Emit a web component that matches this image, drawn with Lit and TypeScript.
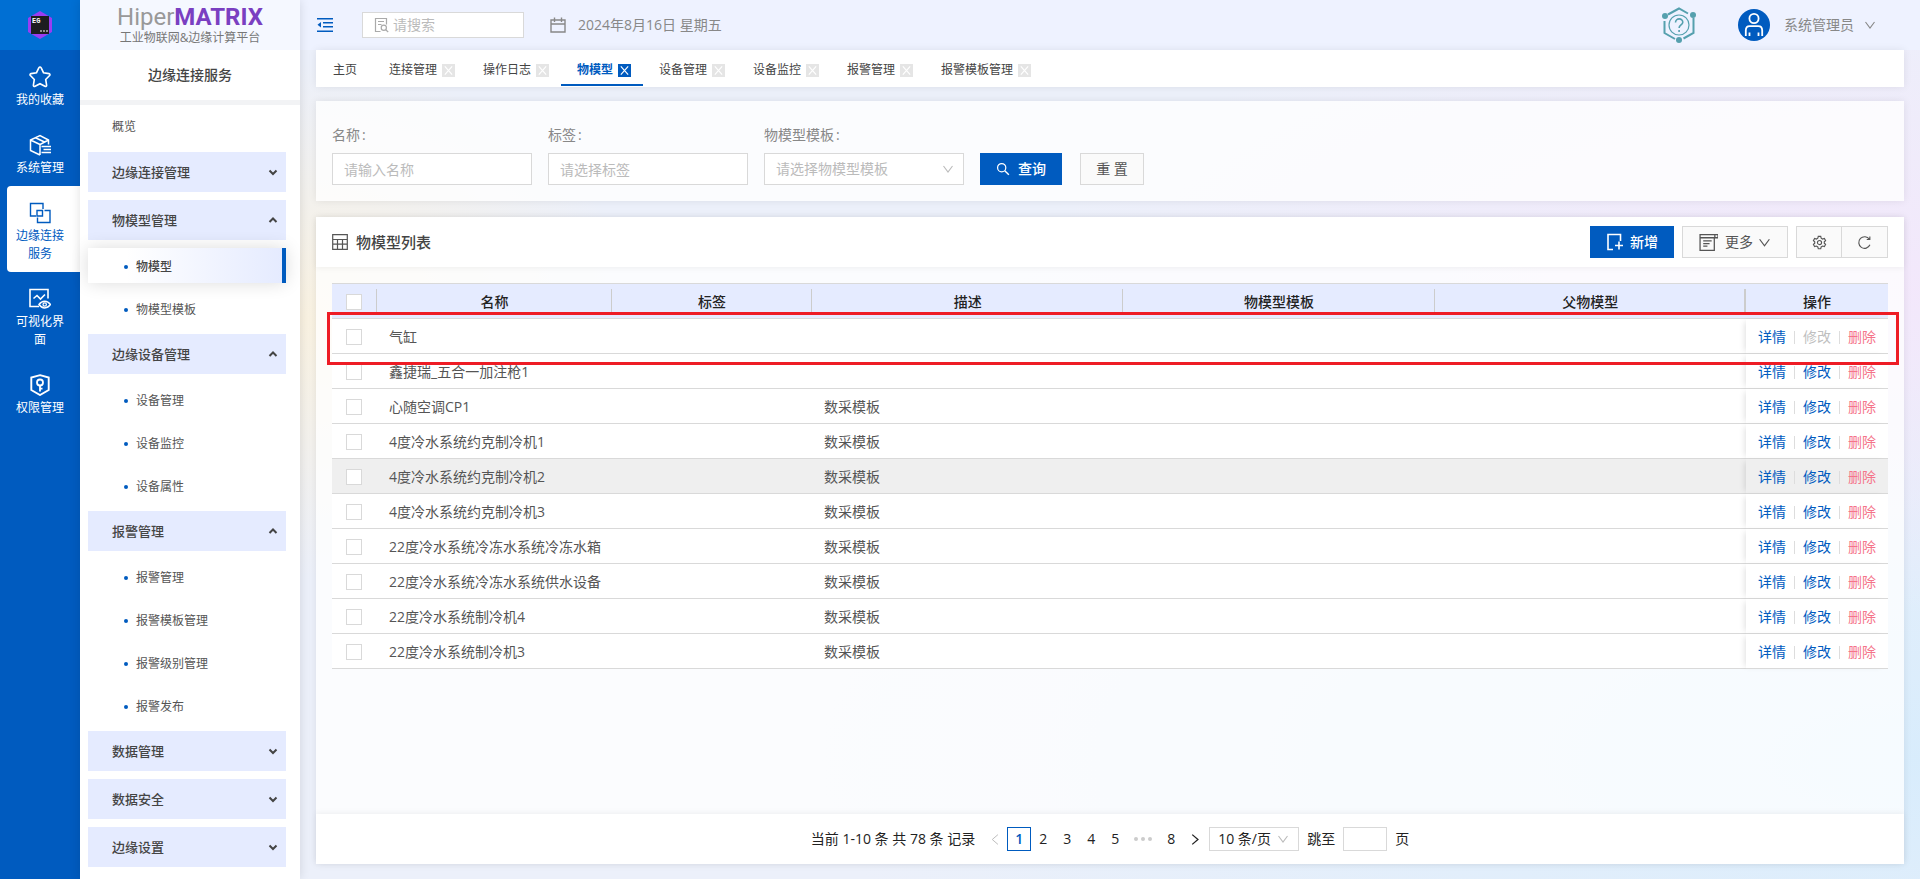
import { LitElement, html, svg, css, nothing } from "lit";
import { customElement, property, state } from "lit/decorators.js";
import { classMap } from "lit/directives/class-map.js";

const icons: Record<string, unknown> = {
  star: svg`<path d="M11 1c.6 0 .9.400 1.200.9l2.300 4.800 5.500.9c1 .2 1.300 1.200.6 1.900l-3.900 4 .9 5.600c.2 1-.8 1.700-1.700 1.200L11 17.700l-4.900 2.600c-.9.5-1.900-.2-1.700-1.200l.9-5.600-3.900-4c-.7-.7-.4-1.700.6-1.900l5.500-.9 2.300-4.800c.3-.5.6-.9 1.200-.9z" stroke-width="1.600"/>`,
  cube: svg`<path d="M19.500 10.500V6L11 1.500 1.500 6v10.500L11 21M1.500 6l9.500 4.500M11 21v-10.500l8.500-4.500M6.500 3.700l9 4.300M12.500 12.500h9.500M14.500 15.500h7.500M12.500 18.500h9.500" stroke-width="1.500"/>`,
  linkbox: svg`<path d="M7 14H1.500V1.500H14V7M8 8.500h5.500v5.500H8zM15.500 8.500h5.500v12H8.500V15.500" stroke-width="1.400"/>`,
  visual: svg`<path d="M10 18.500H1V1.500h18v9M4.500 10.500l3.500-3 3.500 3.500 4.500-4.500" stroke-width="1.600"/><path d="M10 16.500c3-4.500 8.500-4.500 11.500 0-3 4.500-8.500 4.500-11.500 0z" stroke-width="1.500"/><circle cx="15.700" cy="16.500" r="1.700"/>`,
  shield: svg`<path d="M11 1.200l8.700 2.300v12.500L11 21l-8.700-5V3.500z" stroke-width="1.900"/><circle cx="11" cy="8.500" r="3" stroke-width="1.800"/><path d="M11 11.500v6M11 14.700h2.500" stroke-width="1.800"/>`,
  down: svg`<path d="M2 4l6 8 6-8" stroke-width="1.500"/>`,
  caretDown: svg`<path d="M4.500 6.500l3.500 3.500 3.500-3.500" stroke-width="2"/>`,
  caretUp: svg`<path d="M4.500 10l3.500-3.500 3.500 3.500" stroke-width="2"/>`,
  fold: svg`<path d="M0 1.700h16M6 5.700h10M6 9.700h10M0 14.300h16" stroke-width="1.500"/><path d="M4 5v5.500L.5 7.800z" fill="currentColor" stroke="none"/>`,
  docSearch: svg`<path d="M6.500 14.500H1.500v-13h11v6M4 4.500h6M4 7.500h3.500"/><circle cx="9.800" cy="10.800" r="2.600"/><path d="M11.700 12.700l2.500 2.300"/>`,
  calendar: svg`<path d="M1 3h14v12H1zM1 7h14M4.500.5V5M11.500.5V5" stroke-width="1.400"/>`,
  search: svg`<circle cx="6.500" cy="6.500" r="4.700" stroke-width="1.400"/><path d="M10 10l4.700 4.700" stroke-width="1.600"/>`,
  table: svg`<path d="M.7.700h14.600v14.600H.7zM.7 5.500h14.600M.7 10.200h14.600M5.500 5.500V15M10.500 5.500V15"/>`,
  addBox: svg`<path d="M7 16.500H2V1.500h12.500V8M9 12.500h8M13 8.500v8" stroke-width="1.600"/>`,
  list: svg`<path d="M14.500 5v11.500H1v-15h17v3H1M4 7.500h8M4 10h6M4 12.500h4M15 1.500v3"/>`,
  gear: svg`<path d="M6.700 1.500h2.600l.5 1.900 1.500.9 1.900-.6 1.300 2.300-1.400 1.300v1.500l1.400 1.300-1.300 2.300-1.900-.6-1.500.9-.5 1.900H6.700l-.5-1.900-1.500-.9-1.900.6-1.300-2.300 1.400-1.300V7.300L1.500 6l1.300-2.300 1.900.6 1.500-.9z"/><circle cx="8" cy="8" r="2.200"/>`,
  refresh: svg`<path d="M13.800 10.500a6.200 6.200 0 1 1-.6-6M13.700 1.500v3.300h-3.300" stroke-width="1.200"/>`,
  prev: svg`<path d="M11 2L4 8l7 6"/>`,
  next: svg`<path d="M4 2l7 6-7 6" stroke-width="1.600"/>`,
  close: svg`<path d="M3.500 3l9 10M12.500 3l-9 10" stroke-width="1.400"/>`,
};

const icon = (name: string, size = 16, box = 16) => html`<svg
  class="ico" width=${size} height=${size} viewBox="0 0 ${box} ${box}"
  fill="none" stroke="currentColor" stroke-width="1.200" aria-hidden="true">${icons[name]}</svg>`;

interface MenuGroup { label: string; open: boolean; items: string[]; }
interface Row { name: string; desc: string; locked?: boolean; hover?: boolean; }

const RAIL = [
  ["star", "我的收藏"], ["cube", "系统管理"], ["linkbox", "边缘连接服务"],
  ["visual", "可视化界面"], ["shield", "权限管理"],
];

const MENU: MenuGroup[] = [
  { label: "边缘连接管理", open: false, items: [] },
  { label: "物模型管理", open: true, items: ["物模型", "物模型模板"] },
  { label: "边缘设备管理", open: true, items: ["设备管理", "设备监控", "设备属性"] },
  { label: "报警管理", open: true, items: ["报警管理", "报警模板管理", "报警级别管理", "报警发布"] },
  { label: "数据管理", open: false, items: [] },
  { label: "数据安全", open: false, items: [] },
  { label: "边缘设置", open: false, items: [] },
];

const TABS = ["主页", "连接管理", "操作日志", "物模型", "设备管理", "设备监控", "报警管理", "报警模板管理"];

const ROWS: Row[] = [
  { name: "气缸", desc: "", locked: true },
  { name: "鑫捷瑞_五合一加注枪1", desc: "" },
  { name: "心随空调CP1", desc: "数采模板" },
  { name: "4度冷水系统约克制冷机1", desc: "数采模板" },
  { name: "4度冷水系统约克制冷机2", desc: "数采模板", hover: true },
  { name: "4度冷水系统约克制冷机3", desc: "数采模板" },
  { name: "22度冷水系统冷冻水系统冷冻水箱", desc: "数采模板" },
  { name: "22度冷水系统冷冻水系统供水设备", desc: "数采模板" },
  { name: "22度冷水系统制冷机4", desc: "数采模板" },
  { name: "22度冷水系统制冷机3", desc: "数采模板" },
];

const base = css`
  * { box-sizing: border-box; }
  button, input, select { font: inherit; color: inherit; margin: 0; border-radius: 0; }
  button { background: none; border: 0; padding: 0; cursor: pointer; }
  a { color: inherit; text-decoration: none; }
  .ico { display: block; flex: none; }
`;

@customElement("app-rail")
class AppRail extends LitElement {
  static styles = [base, css`
    :host { display: block; width: 80px; flex: none; background: #005bbf; color: #fff; }
    .mark { height: 50px; background: #006fd3; display: flex; align-items: center; justify-content: center; }
    .item {
      display: flex; flex-direction: column; align-items: center; gap: 3px;
      margin-left: 7px; padding: 16px 16px 9px 9px;
      font-size: 12px; line-height: 18px; text-align: center;
    }
    .item.active { background: #fff; color: #005bbf; border-radius: 4px 0 0 4px; }
    .word { width: 48px; }
    .mark text { font-family: "Liberation Mono", monospace; font-weight: 700; }
  `];

  render() {
    return html`
      <div class="mark">
        <svg width="28" height="30" viewBox="0 0 28 30" aria-hidden="true">
          <path d="M14 1l12 7v14l-12 7-12-7V8z" fill="#9a3df2"/>
          <rect x="5" y="6" width="18" height="18" fill="#1d1d1f"/>
          <text x="6" y="13" font-size="7" fill="#fff">EG</text>
          <path d="M14 21h2M17 21h2M20 21h2" stroke="#fff" stroke-width="1.200"/>
        </svg>
      </div>
      <nav>
        ${RAIL.map(([glyph, label], i) => html`
          <a href="#" class=${classMap({ item: true, active: i === 2 })}>
            ${icon(glyph, 22, 22)}<span class="word">${label}</span>
          </a>`)}
      </nav>`;
  }
}

@customElement("app-menu")
class AppMenu extends LitElement {
  @state() private groups = MENU;

  static styles = [base, css`
    :host { display: block; width: 220px; flex: none; background: #fff; color: #555; box-shadow: 0 0 10px rgba(0, 0, 0, .12); z-index: 1; }
    .brand { height: 50px; background: #f5f8ff; text-align: center; padding-top: 4px; }
    .name { font: 400 24px/26px Roboto, sans-serif; color: #999; }
    .name b { font-weight: 700; color: #7a3fc1; }
    .slogan { font-size: 12px; line-height: 16px; color: #777; }
    .title { height: 55px; margin: 0; border-bottom: 5px solid #f2f3f5; font-size: 14px; line-height: 50px; font-weight: 500; text-align: center; color: #444; }
    nav { display: flex; flex-direction: column; gap: 8px; padding: 4px 14px 12px 8px; font-size: 12px; }
    .overview { height: 35px; line-height: 35px; padding-left: 24px; }
    .group { height: 40px; background: #e5ebff; display: flex; align-items: center; justify-content: space-between; padding: 0 5px 0 24px; font-size: 13px; font-weight: 500; color: #444; }
    .leaf { height: 35px; display: flex; align-items: center; gap: 8px; padding: 2px 0 0 36px; }
    .leaf::before { content: ""; width: 4px; height: 4px; border-radius: 50%; background: #005bbf; }
    .leaf.active { background: linear-gradient(90deg, #fff 20%, #e5ebff); border-right: 4px solid #005bbf; color: #444; font-weight: 500; box-shadow: 0 0 18px rgba(0, 0, 0, .14); }
  `];

  private toggle(g: MenuGroup) {
    this.groups = this.groups.map((x) => (x === g ? { ...x, open: !x.open } : x));
  }

  render() {
    return html`
      <div class="brand">
        <div class="name">Hiper<b>MATRIX</b></div>
        <div class="slogan">工业物联网&amp;边缘计算平台</div>
      </div>
      <h2 class="title">边缘连接服务</h2>
      <nav>
        <a class="overview" href="#">概览</a>
        ${this.groups.map((g) => html`
          <button class="group" aria-expanded=${g.open} @click=${() => this.toggle(g)}>
            ${g.label}${icon(g.open ? "caretUp" : "caretDown")}
          </button>
          ${g.open ? g.items.map((t) => html`<a href="#" class=${classMap({ leaf: true, active: t === "物模型" })}>${t}</a>`) : nothing}
        `)}
      </nav>`;
  }
}

@customElement("model-table")
class ModelTable extends LitElement {
  @property({ attribute: false }) rows: Row[] = [];

  static styles = [base, css`
    :host { display: block; position: relative; }
    table { width: 100%; table-layout: fixed; border-collapse: separate; border-spacing: 0; font-size: 14px; line-height: 20px; color: #555; }
    .c-check { width: 45px; } .c-name { width: 235px; } .c-tag { width: 200px; } .c-act { width: 142px; }
    th, td { height: 35px; padding: 2px 12px 0; border-bottom: 1px solid #d9d9d9; text-align: left; white-space: nowrap; }
    td { background: #fff; }
    th { height: 36px; background: linear-gradient(#ccc, #ccc) right 5px / 1px 24px no-repeat #e5ebff; border-top: 1px solid #d9d9d9; text-align: center; font-weight: 500; color: #222; }
    th:nth-last-child(2) { background-size: 2px 24px; background-color: #e5ebff; }
    th:last-child { background: #e5ebff; }
    th:first-child, td:first-child { padding: 2px 14px 0; }
    td:last-child { box-shadow: -4px 0 6px -3px rgba(0, 0, 0, .13); }
    .hover td { background: #efefef; }
    input { appearance: none; display: block; width: 16px; height: 16px; border: 1px solid #d9d9d9; background: #fff; }
    .acts { display: flex; align-items: center; gap: 8px; color: #005bbf; }
    .acts i { width: 1px; height: 13px; background: #ddd; }
    .off { color: #bfbfbf; }
    .del { color: #f5738a; }
    .focus { position: absolute; top: 29px; left: -5px; right: -11px; height: 53px; border: 3px solid #ee1c25; pointer-events: none; }
  `];

  render() {
    return html`
      <table>
        <colgroup><col class="c-check"><col class="c-name"><col class="c-tag"><col><col><col><col class="c-act"></colgroup>
        <thead><tr>
          <th><input type="checkbox" aria-label="全选"></th>
          <th>名称</th><th>标签</th><th>描述</th><th>物模型模板</th><th>父物模型</th><th>操作</th>
        </tr></thead>
        <tbody>
          ${this.rows.map((r) => html`<tr class=${classMap({ hover: !!r.hover })}>
            <td><input type="checkbox" aria-label=${r.name}></td>
            <td>${r.name}</td><td></td><td>${r.desc}</td><td></td><td></td>
            <td><div class="acts"><a href="#">详情</a><i></i><a href="#" class=${r.locked ? "off" : ""}>修改</a><i></i><a href="#" class="del">删除</a></div></td>
          </tr>`)}
        </tbody>
      </table>
      <div class="focus"></div>`;
  }
}

@customElement("app-root")
class AppRoot extends LitElement {
  @state() private tab = "物模型";
  @state() private page = 1;

  static styles = [base, css`
    :host {
      display: flex; min-height: 100vh; color: #555;
      font: 14px/20px "Open Sans", "Noto Sans CJK SC", sans-serif;
      background:
        radial-gradient(ellipse 340px 260px at 300px 320px, rgba(250, 242, 224, .95), transparent),
        radial-gradient(ellipse 900px 320px at 100% 290px, rgba(243, 231, 251, .95), transparent),
        radial-gradient(ellipse 1100px 420px at 100% 760px, rgba(215, 236, 252, .95), transparent),
        #ecf0fa;
    }
    main { flex: 1; min-width: 0; display: flex; flex-direction: column; }
    .top { height: 50px; background: #eef2ff; display: flex; align-items: center; padding: 0 44px 0 17px; color: #888; }
    .fold { color: #005bbf; }
    .find { display: flex; align-items: center; gap: 3px; width: 162px; height: 26px; margin: 0 26px 0 29px; padding: 0 11px; border: 1px solid #d9d9d9; background: #fff; color: #aaa; }
    .find input { width: 100%; min-width: 0; border: 0; padding: 0; background: none; outline: 0; }
    ::placeholder { color: #bbb; opacity: 1; }
    .date { display: flex; gap: 12px; align-items: center; }
    .help { margin: 0 41px 0 auto; }
    .user { display: flex; align-items: center; gap: 14px; color: #888; }
    .user .ico { margin-left: -4px; }
    .tabs { display: flex; height: 37px; margin: 0 16px; padding-left: 1px; background: #fff; box-shadow: 0 0 8px rgba(0, 0, 0, .08); font-size: 12px; color: #444; }
    .tab { display: flex; align-items: center; gap: 5px; padding: 6px 12px 0 16px; border-bottom: 2px solid transparent; height: 36px; }
    .tab.home { padding-right: 16px; }
    .tab.on { color: #005bbf; font-weight: 700; border-bottom-color: #005bbf; }
    .x { background: #e5e5e5; color: #fff; }
    .on .x { background: #005bbf; }
    .filter { display: flex; align-items: flex-end; gap: 16px; height: 100px; margin: 14px 16px 16px; padding: 0 16px 16px; background: rgba(255, 255, 255, .78); box-shadow: 0 0 8px rgba(0, 0, 0, .08); }
    .field { display: flex; flex-direction: column; gap: 8px; width: 200px; color: #888; }
    .field label::after { content: ":"; margin-left: 2px; }
    .box { width: 100%; height: 32px; border: 1px solid #d9d9d9; background: #fff; padding: 0 11px; outline: 0; }
    .pick { position: relative; display: block; color: #bbb; }
    .pick select { appearance: none; }
    .pick .ico { position: absolute; right: 10px; top: 50%; margin-top: -6px; pointer-events: none; }
    .btn { display: inline-flex; align-items: center; justify-content: center; height: 32px; border: 1px solid #d9d9d9; background: #fafafa; color: #555; }
    .btn.primary { background: #005bbf; border-color: #005bbf; color: #fff; font-weight: 500; }
    .query { width: 82px; gap: 8px; }
    .reset { width: 64px; margin-left: 2px; white-space: pre; }
    .card { flex: 1; display: flex; flex-direction: column; margin: 0 16px 15px; background: rgba(255, 255, 255, .76); box-shadow: 0 0 8px rgba(0, 0, 0, .08); }
    .head { display: flex; align-items: center; gap: 8px; height: 50px; padding: 0 16px; background: #fff; box-shadow: 0 1px 6px rgba(0, 0, 0, .06); }
    .head h1 { margin: 0 auto 0 0; font-size: 15px; font-weight: 500; color: #444; }
    .add { width: 84px; gap: 6px; }
    .more { width: 106px; gap: 7px; }
    .more .ico:last-child { margin-left: -2px; }
    .pair { display: flex; }
    .pair .btn { width: 46px; }
    .pair .btn + .btn { border-left: 0; }
    .body { flex: 1; padding: 16px 16px 24px; }
    .pager { display: flex; align-items: center; justify-content: center; height: 50px; background: #fff; box-shadow: 0 -1px 6px rgba(0, 0, 0, .06); color: #222; }
    .pages { display: flex; margin: 0 2px 0 8px; }
    .pg { display: flex; align-items: center; justify-content: center; width: 24px; height: 24px; }
    .pg.cur { border: 1px solid #005bbf; color: #005bbf; font-weight: 600; }
    .pg.off { color: #bbb; }
    .dots { width: 32px; display: flex; align-items: center; justify-content: center; gap: 3px; }
    .dots i { width: 4px; height: 4px; border-radius: 50%; background: #ccc; }
    .size { width: 90px; color: #bbb; }
    .size select, .jump input { height: 24px; padding: 0 8px; }
    .size select { color: #222; }
    .jump { display: flex; align-items: center; gap: 8px; margin-left: 8px; }
    .jump input { width: 44px; }
  `];

  render() {
    return html`
      <app-rail></app-rail>
      <app-menu></app-menu>
      <main>
        <header class="top">
          <button class="fold" aria-label="收起菜单">${icon("fold")}</button>
          <label class="find">${icon("docSearch")}<input type="text" placeholder="请搜索" aria-label="搜索"></label>
          <div class="date">${icon("calendar")}<span>2024年8月16日 星期五</span></div>
          <button class="help" aria-label="帮助">
            <svg class="ico" width="36" height="38" viewBox="0 0 36 38" fill="none" stroke="#55a0ae" stroke-width="2">
              <path d="M7 8.500L18 2.500l9 5M32.500 12v15l-10 5.500M14 33L3.500 27V15"/>
              <circle cx="18" cy="19" r="10" stroke-width="1.200"/>
              <path d="M14.500 16.500c0-5 7.500-4.500 7.300-.2-.2 2.700-3.700 2.700-3.700 5.700M18.100 24v2" stroke-width="1.600"/>
              <g fill="#55a0ae" stroke="none"><circle cx="4" cy="10" r="3"/><circle cx="32" cy="9" r="3"/><circle cx="18" cy="34" r="3"/></g>
            </svg>
          </button>
          <button class="user">
            <svg width="32" height="32" viewBox="0 0 32 32" fill="none" stroke="#fff" stroke-width="1.800" aria-hidden="true">
              <circle cx="16" cy="16" r="16" fill="#005bbf" stroke="none"/>
              <circle cx="16" cy="9.500" r="4.600"/>
              <path d="M7.800 27v-5.500c0-3 1.500-4.300 4-4.300h8.400c2.500 0 4 1.300 4 4.300V27M11.500 23.500V27M20.500 23.500V27"/>
            </svg>
            <span>系统管理员</span>${icon("down", 12)}
          </button>
        </header>

        <nav class="tabs">
          ${TABS.map((t, i) => html`
            <a href="#" class=${classMap({ tab: true, home: i === 0, on: t === this.tab })}
              @click=${() => (this.tab = t)}>${t}${i ? html`<span class="x">${icon("close", 13)}</span>` : nothing}</a>`)}
        </nav>

        <form class="filter" @submit=${(e: Event) => e.preventDefault()}>
          <div class="field"><label for="f-name">名称</label><input class="box" id="f-name" placeholder="请输入名称"></div>
          <div class="field"><label for="f-tag">标签</label><input class="box" id="f-tag" placeholder="请选择标签"></div>
          <div class="field"><label for="f-tpl">物模型模板</label>
            <span class="pick"><select class="box" id="f-tpl"><option>请选择物模型模板</option></select>${icon("down", 12)}</span>
          </div>
          <button class="btn primary query">${icon("search", 14)}查询</button>
          <button class="btn reset" type="reset">重 置</button>
        </form>

        <section class="card">
          <div class="head">
            ${icon("table")}<h1>物模型列表</h1>
            <button class="btn primary add">${icon("addBox", 18, 18)}新增</button>
            <button class="btn more">${icon("list", 19, 18)}更多${icon("down", 13)}</button>
            <div class="pair">
              <button class="btn" aria-label="设置">${icon("gear", 15)}</button>
              <button class="btn" aria-label="刷新">${icon("refresh", 15)}</button>
            </div>
          </div>
          <div class="body"><model-table .rows=${ROWS}></model-table></div>
          <footer class="pager">
            <span>当前 1-10 条 共 78 条 记录</span>
            <div class="pages">
              <button class="pg off" aria-label="上一页">${icon("prev", 13)}</button>
              ${[1, 2, 3, 4, 5].map((n) => html`<button class=${classMap({ pg: true, cur: n === this.page })} @click=${() => (this.page = n)}>${n}</button>`)}
              <span class="dots"><i></i><i></i><i></i></span>
              <button class="pg">8</button>
              <button class="pg" aria-label="下一页">${icon("next", 13)}</button>
            </div>
            <span class="pick size"><select class="box" aria-label="每页条数"><option>10 条/页</option></select>${icon("down", 12)}</span>
            <label class="jump">跳至<input class="box" type="text">页</label>
          </footer>
        </section>
      </main>`;
  }
}
